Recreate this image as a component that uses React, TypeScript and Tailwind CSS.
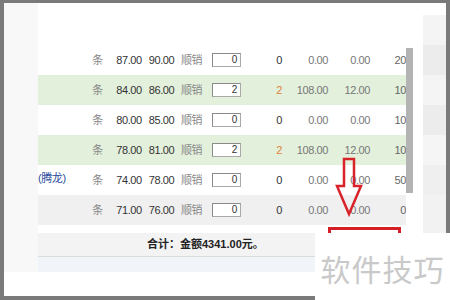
const rows = [
  { name: "", unit: "条", a: "87.00", b: "90.00", qty: "0", n: "0", amt: "0.00", disc: "0.00", last: "20", bg: "bg-white" },
  { name: "", unit: "条", a: "84.00", b: "86.00", qty: "2", n: "2", amt: "108.00", disc: "12.00", last: "10", bg: "bg-[#e3f0dc]" },
  { name: "", unit: "条", a: "80.00", b: "85.00", qty: "0", n: "0", amt: "0.00", disc: "0.00", last: "10", bg: "bg-white" },
  { name: "", unit: "条", a: "78.00", b: "81.00", qty: "2", n: "2", amt: "108.00", disc: "12.00", last: "10", bg: "bg-[#e3f0dc]" },
  { name: "(腾龙)", unit: "条", a: "74.00", b: "78.00", qty: "0", n: "0", amt: "0.00", disc: "0.00", last: "50", bg: "bg-white" },
  { name: "", unit: "条", a: "71.00", b: "76.00", qty: "0", n: "0", amt: "0.00", disc: "0.00", last: "0", bg: "bg-[#f0f0f0]" },
];

const font = { fontFamily: '"Liberation Sans", "Noto Sans CJK SC", sans-serif' };

export default function App() {
  return (
    <div className="relative flex h-[300px] w-[450px] overflow-hidden bg-[#7a7a7a] pb-[4px] pl-[4px] pr-[4px] pt-[3px]" style={font}>
      <div className="flex h-full w-full bg-white">
        {/* faded left strip */}
        <div className="h-[269px] w-[34px] shrink-0 bg-[#f8f8f8]" />

        {/* table */}
        <div className="flex w-[368px] shrink-0 flex-col">
          <div className="h-[42px]" />
          {rows.map((r, i) => (
            <div
              key={i}
              className={`grid h-[30px] items-center text-[11px] tracking-[-0.4px] ${r.bg} grid-cols-[47px_25px_38px_27px_33px_40px_44px_36px_42px_36px]`}
            >
              <div className="flex h-full w-full items-start justify-start pt-[5px] text-left text-[#2b4c9b]">
                <span className="whitespace-nowrap">{r.name}</span>
              </div>
              <span className="text-center text-[#888]">{r.unit}</span>
              <span className="text-center text-[#333]">{r.a}</span>
              <span className="text-center text-[#333]">{r.b}</span>
              <span className="text-center text-[#888]">顺销</span>
              <div className="pl-[4px]">
                <div className="flex h-[14px] w-[29px] items-center justify-end border border-[#a9a9a9] border-t-[#8a8a8a] border-l-[#8a8a8a] bg-white pr-[3px] text-[10px] leading-none text-[#333]">
                  {r.qty}
                </div>
              </div>
              <span className={`pr-[10px] text-right ${r.n === "2" ? "text-[#e0823d]" : "text-[#333]"}`}>{r.n}</span>
              <span className="text-right text-[#777]">{r.amt}</span>
              <span className="text-right text-[#777]">{r.disc}</span>
              <span className="overflow-hidden text-right text-[#666]">{r.last}</span>
            </div>
          ))}
          <div className="h-[8px]" />
          <div className="flex h-[24px] items-center border-b border-[#dcdcdc] bg-[#f3f3f3] pl-[109px] text-[11px] font-bold text-[#222]">
            <span>
              合计<span className="tracking-[-4px]">：</span>
            </span>
            <span className="ml-[4px]">金额4341.00元。</span>
          </div>
          <div className="h-[15px] bg-[#f1f4f8]" />
        </div>

        {/* scrollbar */}
        <div className="mt-[45px] h-[145px] w-[7px] shrink-0 bg-[#b3b3b3]" />
        <div className="w-[10px] shrink-0" />

        {/* faded right strip */}
        <div className="flex w-[23px] shrink-0 flex-col bg-[#f2f2f2]">
          <div className="h-[12px] bg-white" />
          <div className="h-[30px] bg-[#f4f4f4]" />
          <div className="h-[30px] bg-[#ececec]" />
          <div className="h-[30px] bg-[#f4f4f4]" />
          <div className="h-[30px] bg-[#ececec]" />
          <div className="h-[30px] bg-[#f5f5f5]" />
          <div className="h-[30px] bg-[#efefef]" />
        </div>
      </div>

      {/* annotation: arrow */}
      <svg className="absolute left-0 top-0" width="450" height="300" viewBox="0 0 450 300">
        <polygon
          points="344,159 354,159 354,186 361,186 349,214 337,186 344,186"
          fill="none"
          stroke="#d9232a"
          strokeWidth="2.5"
          strokeLinejoin="miter"
        />
      </svg>

      {/* annotation: red box */}
      <div className="absolute left-[328px] top-[227px] h-[40px] w-[73px] border-[3px] border-[#d51f26]" />

      {/* watermark */}
      <div className="absolute left-[315px] top-[233px] flex h-[67px] w-[135px] items-center justify-center bg-white pt-[2px]">
        <span className="text-[30px] leading-none tracking-[1px] text-[#c9c9c9]" style={{ fontFamily: '"Noto Sans CJK SC", sans-serif' }}>
          软件技巧
        </span>
      </div>
    </div>
  );
}
